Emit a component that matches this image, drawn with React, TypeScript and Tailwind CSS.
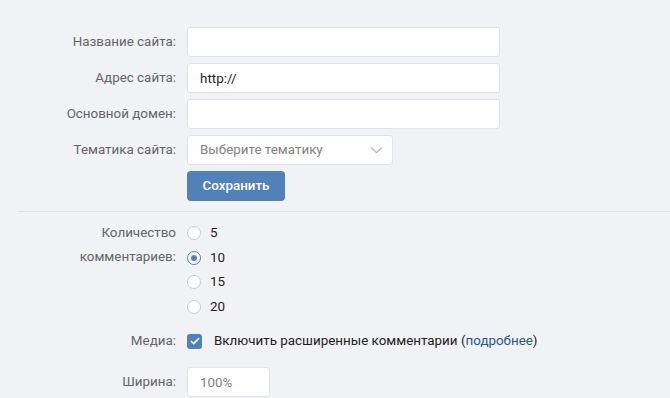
import React from "react";

const labelCls = "w-[176px] shrink-0 text-right text-[13.4px] text-[#656565]";
const inputCls =
  "h-[30px] rounded-[3px] border border-[#dfe2e8] bg-white px-3 text-[13.4px] text-[#222] outline-none";

function Row({ label, children }: { label: string; children: React.ReactNode }) {
  return (
    <div className="flex h-[30px] items-center gap-[11px]">
      <span className={labelCls}>{label}</span>
      {children}
    </div>
  );
}

function Radio({ value, checked }: { value: string; checked?: boolean }) {
  return (
    <div className="flex h-[24.5px] items-center gap-[9px]">
      <span
        className={`flex h-[14px] w-[14px] items-center justify-center rounded-full border bg-white ${
          checked ? "border-[#5181b8]" : "border-[#c5ccd5]"
        }`}
      >
        {checked && <span className="h-[6px] w-[6px] rounded-full bg-[#5181b8]" />}
      </span>
      <span className="text-[13.4px] text-[#222]">{value}</span>
    </div>
  );
}

export default function App() {
  return (
    <div
      className="h-[398px] w-[670px] overflow-hidden bg-[#f0f2f5]"
      style={{ fontFamily: "Roboto, 'Liberation Sans', sans-serif" }}
    >
      <div className="flex flex-col gap-[6px] pt-[27px]">
        <Row label="Название сайта:">
          <input className={`${inputCls} w-[313px]`} />
        </Row>
        <Row label="Адрес сайта:">
          <input className={`${inputCls} w-[313px]`} defaultValue="http://" />
        </Row>
        <Row label="Основной домен:">
          <input className={`${inputCls} w-[313px]`} />
        </Row>
        <Row label="Тематика сайта:">
          <div className={`${inputCls} flex w-[206px] items-center justify-between pr-[9px]`}>
            <span className="text-[#828282]">Выберите тематику</span>
            <svg width="13" height="8" viewBox="0 0 13 8" fill="none">
              <path d="M1 1.5l5.5 5 5.5-5" stroke="#b8bec6" strokeWidth="1.4" />
            </svg>
          </div>
        </Row>
        <div className="flex h-[30px] items-center gap-[11px]">
          <span className="w-[176px] shrink-0" />
          <button className="h-[30px] w-[98px] rounded-[4px] bg-[#5181b8] text-[13.4px] font-medium text-white">
            Сохранить
          </button>
        </div>
      </div>

      <div className="ml-[18px] mt-[10px] border-t border-[#dce1e6]" />

      <div className="mt-[9px] flex gap-[11px]">
        <div className={`${labelCls} leading-[24px]`}>
          Количество
          <br />
          комментариев:
        </div>
        <div className="flex flex-col">
          <Radio value="5" />
          <Radio value="10" checked />
          <Radio value="15" />
          <Radio value="20" />
        </div>
      </div>

      <div className="mt-[10px] flex h-[24px] items-center gap-[11px]">
        <span className={labelCls}>Медиа:</span>
        <span className="flex h-[15px] w-[15px] items-center justify-center rounded-[3px] bg-[#5181b8]">
          <svg width="10" height="8" viewBox="0 0 10 8" fill="none">
            <path d="M1 4l2.6 2.6L9 1.2" stroke="white" strokeWidth="1.6" />
          </svg>
        </span>
        <span className="ml-[1px] text-[13.4px] text-[#222]">
          Включить расширенные комментарии (
          <span className="text-[#2a5885]">подробнее</span>)
        </span>
      </div>

      <div className="mt-[14px]">
        <Row label="Ширина:">
          <input className={`${inputCls} w-[83px] text-[#828282]`} defaultValue="100%" />
        </Row>
      </div>
    </div>
  );
}
